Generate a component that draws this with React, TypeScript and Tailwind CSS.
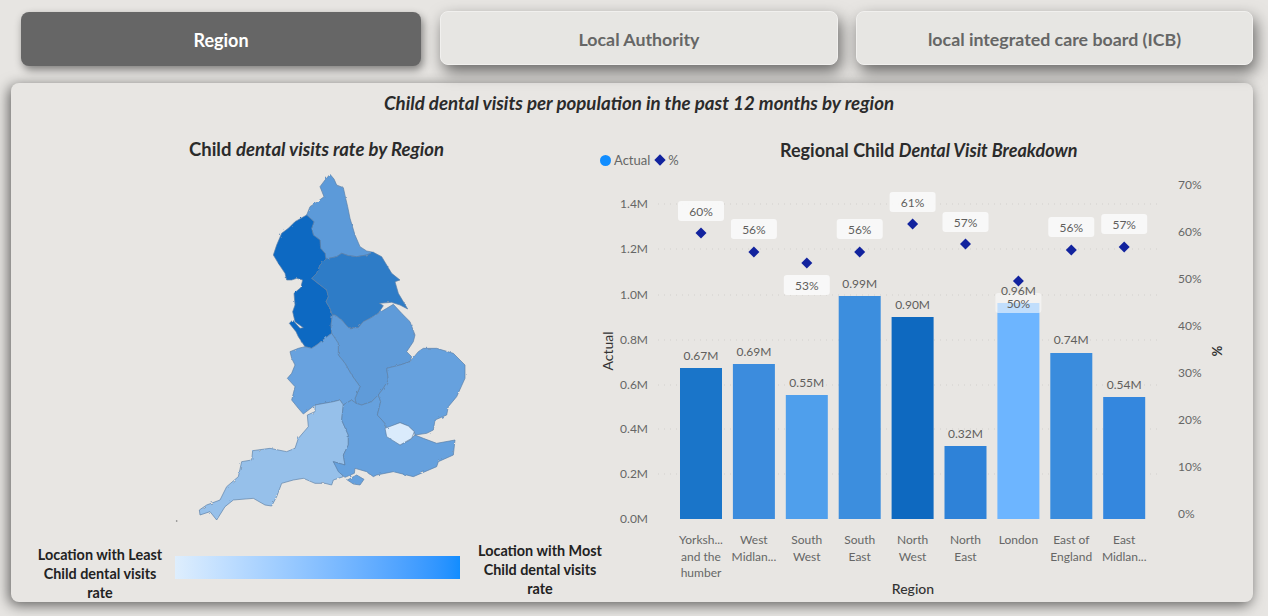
const font = { fontFamily: '"Lato", "Noto Sans", sans-serif' };

const regions = [
  { name: ["Yorksh...", "and the", "humber"], value: "0.67M", top: 368, color: "#1a75c9", pct: "60%", dy: 233, boxY: 201, labelY: 356 },
  { name: ["West", "Midlan..."], value: "0.69M", top: 364, color: "#3c8cdd", pct: "56%", dy: 252, boxY: 219, labelY: 352 },
  { name: ["South", "West"], value: "0.55M", top: 395, color: "#4f9fec", pct: "53%", dy: 263, boxY: 275, labelY: 383 },
  { name: ["South", "East"], value: "0.99M", top: 296, color: "#3c8ede", pct: "56%", dy: 252, boxY: 219, labelY: 284 },
  { name: ["North", "West"], value: "0.90M", top: 317, color: "#0e69c0", pct: "61%", dy: 224, boxY: 192, labelY: 305 },
  { name: ["North", "East"], value: "0.32M", top: 446, color: "#2e82d8", pct: "57%", dy: 244, boxY: 212, labelY: 434 },
  { name: ["London"], value: "0.96M", top: 303, color: "#6db5ff", pct: "50%", dy: 281, boxY: 293, labelY: 291 },
  { name: ["East of", "England"], value: "0.74M", top: 353, color: "#3a8cdd", pct: "56%", dy: 250, boxY: 217, labelY: 340 },
  { name: ["East", "Midlan..."], value: "0.54M", top: 397, color: "#3487de", pct: "57%", dy: 247, boxY: 214, labelY: 385 },
];

const leftAxis = [
  ["1.4M", 204], ["1.2M", 249], ["1.0M", 295], ["0.8M", 340],
  ["0.6M", 385], ["0.4M", 429], ["0.2M", 474], ["0.0M", 519],
] as const;

const rightAxis = [
  ["70%", 185], ["60%", 232], ["50%", 279], ["40%", 326],
  ["30%", 373], ["20%", 420], ["10%", 467], ["0%", 514],
] as const;

// map outlines, traced at 3x from the top of the map
const mapShapes = [
  { fill: "#5b9ad9", d: "M480 28 492 42 500 60 520 68 527 100 533 125 540 160 555 210 570 245 590 258 610 262 590 270 560 275 535 272 515 265 500 275 468 282 465 265 452 250 450 225 430 210 425 190 432 170 410 150 420 125 445 108 462 95 450 65 465 45Z" },
  { fill: "#0f69c2", d: "M410 150 432 170 425 190 430 210 450 225 452 250 465 265 468 282 450 300 440 325 425 340 440 352 470 375 475 395 468 410 480 430 487 450 483 480 485 505 465 520 440 540 425 550 405 545 385 515 378 500 358 475 368 465 390 490 400 488 375 470 368 440 375 420 372 385 392 368 398 345 380 340 365 345 350 345 345 325 325 295 310 270 320 240 335 205 355 190 375 170Z" },
  { fill: "#2e7bc7", d: "M468 282 500 275 515 265 535 272 560 275 590 270 610 262 635 275 650 300 665 325 690 345 675 350 685 385 713 432 690 420 665 412 628 415 640 422 625 445 600 460 580 470 565 488 535 488 515 465 495 450 487 450 480 430 468 410 475 395 470 375 440 352 425 340 440 325 450 300Z" },
  { fill: "#5f9bd9", d: "M495 450 515 465 535 488 565 488 580 470 600 460 625 445 650 430 670 418 695 445 720 470 735 510 730 530 710 560 725 575 720 590 690 600 650 610 655 645 640 670 625 690 605 710 575 720 558 715 555 700 570 665 545 630 525 595 505 570 505 535 485 505 483 480 487 450Z" },
  { fill: "#67a2df", d: "M385 550 360 560 365 580 375 600 365 625 352 640 375 665 365 705 385 730 400 747 435 720 490 710 510 705 520 720 545 705 558 715 555 700 570 665 545 630 525 595 505 570 505 535 485 505 465 520 440 540 425 550 405 545Z" },
  { fill: "#96c0ea", d: "M435 720 490 710 510 705 520 720 515 765 535 810 535 840 520 870 525 900 490 890 510 920 520 935 490 945 485 960 465 955 435 955 400 940 370 945 335 955 320 995 305 1023 285 1020 250 1000 190 1005 165 1025 140 1065 120 1040 90 1050 88 1035 110 1020 150 1005 170 965 205 935 215 890 245 885 248 857 300 850 350 860 375 850 385 820 415 785 412 750 435 740Z" },
  { fill: "#66a1de", d: "M520 720 545 705 558 715 575 720 605 710 625 690 632 710 622 750 645 775 650 810 690 840 720 825 735 810 760 820 800 835 855 825 850 870 805 890 800 905 730 935 670 920 620 930 610 935 590 920 555 910 553 925 525 937 505 920 490 890 525 900 520 870 535 840 535 810 515 765Z M532 945 560 930 582 943 570 960 550 957Z" },
  { fill: "#66a1de", d: "M760 550 800 550 850 565 885 600 885 640 860 695 835 725 830 750 795 765 790 795 770 805 735 810 733 800 715 783 690 773 650 790 645 775 622 750 632 710 625 690 640 670 655 645 650 610 690 600 720 590 745 560Z" },
  { fill: "#daebfc", d: "M645 790 690 773 715 783 733 800 725 820 690 840 650 815Z" },
];

function EnglandMap() {
  return (
    <svg viewBox="0 15 930 1080" className="w-[310px] h-[360px] ml-[159px] shrink-0">
      <defs>
        <filter id="coast" x="-5%" y="-5%" width="110%" height="110%">
          <feTurbulence type="fractalNoise" baseFrequency="0.08" numOctaves="2" seed="4" />
          <feDisplacementMap in="SourceGraphic" scale="7" />
        </filter>
      </defs>
      <g filter="url(#coast)">
        {mapShapes.map((s, i) => (
          <path key={i} d={s.d} fill={s.fill} stroke="#5a7fa6" strokeWidth="2" strokeLinejoin="round" />
        ))}
      </g>
      <circle cx="20" cy="1068" r="2.5" fill="#777" />
    </svg>
  );
}

function Chart() {
  return (
    <svg viewBox="596 170 657 432" className="w-[657px] h-[432px] block" fontFamily='"Lato", "Noto Sans", sans-serif'>
      {leftAxis.slice(0, 7).map(([, y]) => (
        <line key={y} x1="658" x2="1162" y1={y} y2={y} stroke="#d2d0cd" strokeDasharray="1 5" />
      ))}
      {leftAxis.map(([label, y]) => (
        <text key={label} x="648" y={y + 4} textAnchor="end" fontSize="12" fill="#666">{label}</text>
      ))}
      {rightAxis.map(([label, y]) => (
        <text key={label} x="1178" y={y + 4} fontSize="12" fill="#666">{label}</text>
      ))}
      {regions.map((r, i) => {
        const cx = 701 + i * 52.9;
        return (
          <g key={r.value}>
            <rect x={cx - 21} y={r.top} width="42" height={519 - r.top} fill={r.color} />
            <rect x={cx - 23} y={r.boxY} width="46" height="20" rx="3" fill="#fafafa" fillOpacity={r.pct === "50%" ? 0.6 : 0.9} />
            <text x={cx} y={r.labelY + 4} textAnchor="middle" fontSize="12" fill="#605e5c">{r.value}</text>
            <text x={cx} y={r.boxY + 15} textAnchor="middle" fontSize="12" fill="#605e5c">{r.pct}</text>
            <path d={`M${cx} ${r.dy - 5.5} L${cx + 5.5} ${r.dy} L${cx} ${r.dy + 5.5} L${cx - 5.5} ${r.dy}Z`} fill="#12239e" />
            {r.name.map((line, j) => (
              <text key={line} x={cx} y={544 + j * 16.5} textAnchor="middle" fontSize="12" fill="#666">{line}</text>
            ))}
          </g>
        );
      })}
      <text x="913" y="594" textAnchor="middle" fontSize="14" fill="#333" fontWeight="500">Region</text>
      <text transform="translate(613 351) rotate(-90)" textAnchor="middle" fontSize="14" fill="#333">Actual</text>
      <text transform="translate(1212 351) rotate(90)" textAnchor="middle" fontSize="13" fontWeight="700" fill="#333">%</text>
    </svg>
  );
}

export default function App() {
  return (
    <div className="w-[1268px] h-[616px] overflow-hidden bg-[#e7e5e2]" style={font}>
      <div className="flex pt-[11px] pl-[21px] h-[83px] items-start">
        <button className="w-[400px] h-[54px] mt-px mr-[19px] pt-0.5 rounded-lg bg-[#666666] text-white font-bold text-[18px] shadow-[2px_4px_9px_rgba(0,0,0,0.45)]">
          Region
        </button>
        <button className="w-[398px] h-[54px] mr-[18px] pt-0.5 rounded-lg bg-[#e7e6e3] border border-[#f1f0ee] text-[#666666] font-bold text-[17.8px] shadow-[3px_7px_16px_rgba(0,0,0,0.55)]">
          Local Authority
        </button>
        <button className="w-[397px] h-[54px] pt-0.5 rounded-lg bg-[#e7e6e3] border border-[#f1f0ee] text-[#666666] font-bold text-[17.8px] shadow-[3px_7px_16px_rgba(0,0,0,0.55)]">
          local integrated care board (ICB)
        </button>
      </div>
      <div className="ml-[11px] w-[1242px] h-[519px] rounded-lg bg-[#e8e6e3] shadow-[-2px_3px_14px_rgba(0,0,0,0.6)]">
        <h1 className="h-10 flex items-center justify-center pl-[14px] text-[18.7px] font-bold italic text-[#2b2b2b]">
          Child dental visits per population in the past 12 months by region
        </h1>
        <div className="flex pt-[7px]">
          <div className="w-[585px] shrink-0">
            <h2 className="h-10 flex items-center justify-center pl-[26px] text-[18.5px] font-bold text-[#2b2b2b]">
              Child&nbsp;<em>dental visits rate by Region</em>
            </h2>
            <EnglandMap />
            <div className="flex pl-[19px] text-[14.4px] leading-[19px] font-bold text-[#222222] text-center">
              <div className="w-[140px] shrink-0 pt-[15px]">Location with Least<br />Child dental visits<br />rate</div>
              <div className="w-[285px] shrink-0 h-[23px] mt-[26px] ml-[5px] bg-gradient-to-r from-[#deeefd] to-[#118dff]" />
              <div className="w-[140px] shrink-0 pt-[11px] ml-[10px]">Location with Most<br />Child dental visits<br />rate</div>
            </div>
          </div>
          <div className="w-[657px]">
            <div className="h-10 flex items-start">
              <div className="w-[184px] pt-[21px] pl-1 flex items-center text-[13px] leading-[18px] text-[#666666]">
                <span className="w-[11px] h-[11px] rounded-full bg-[#118dff] mr-[3px]" />
                Actual
                <span className="w-[8px] h-[8px] rotate-45 bg-[#12239e] ml-[6px] mr-[4px]" />
                %
              </div>
              <h2 className="h-10 flex items-center text-[18px] font-bold text-[#2b2b2b]">
                Regional Child&nbsp;<em>Dental Visit Breakdown</em>
              </h2>
            </div>
            <Chart />
          </div>
        </div>
      </div>
    </div>
  );
}
